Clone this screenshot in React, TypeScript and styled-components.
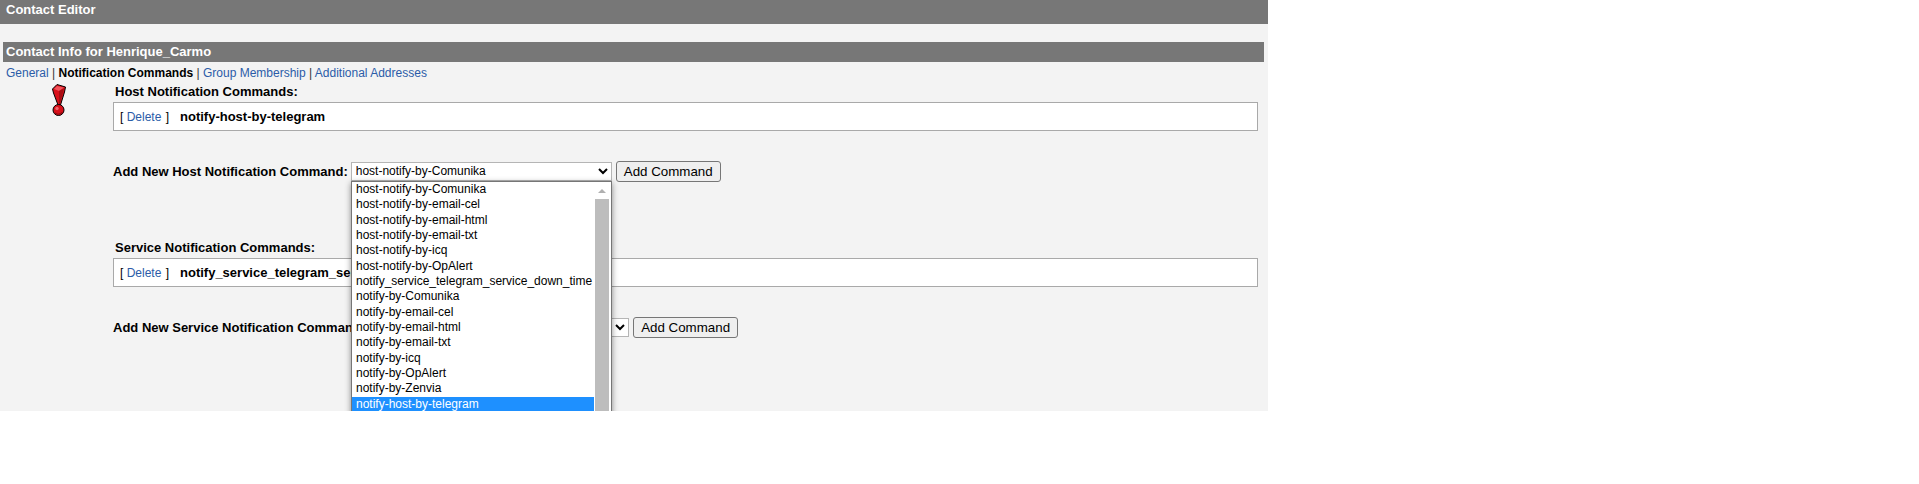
import React from "react";
import styled, { createGlobalStyle } from "styled-components";

const GlobalStyle = createGlobalStyle`
    html, body {
        margin: 0;
        padding: 0;
        background: #ffffff;
        font-family: "Liberation Sans", Arial, sans-serif;
    }
`;

const hostOptions = [
    "host-notify-by-Comunika",
    "host-notify-by-email-cel",
    "host-notify-by-email-html",
    "host-notify-by-email-txt",
    "host-notify-by-icq",
    "host-notify-by-OpAlert",
    "notify_service_telegram_service_down_time",
    "notify-by-Comunika",
    "notify-by-email-cel",
    "notify-by-email-html",
    "notify-by-email-txt",
    "notify-by-icq",
    "notify-by-OpAlert",
    "notify-by-Zenvia",
    "notify-host-by-telegram",
];

const AlertIcon = () => (
    <svg width="14" height="32" viewBox="0 0 14 32">
        <polygon points="0.5,5 5,0.5 13.5,3 12.5,8 8.5,21 6,21 1.5,9" fill="#d8101a" stroke="#000" strokeWidth="1" />
        <polygon points="2,5 5,2 12,3.6 7,7" fill="#f2525a" />
        <polygon points="7,7 12,4.5 8,20 7,20" fill="#a80c12" />
        <circle cx="6.5" cy="26" r="5.5" fill="#d8101a" stroke="#000" strokeWidth="1" />
        <circle cx="5" cy="24.5" r="1.7" fill="#f2666c" />
        <path d="M3 29 A5 5 0 0 0 10.5 28" fill="none" stroke="#8f0a0f" strokeWidth="1.2" />
    </svg>
);

const NotificationBlock: React.FC<{
    title: string;
    command: string;
    addLabel: string;
    selected: string;
    selectWidth: number;
    gapAfter: number;
}> = ({ title, command, addLabel, selected, selectWidth, gapAfter }) => (
    <Block $gapAfter={gapAfter}>
        <BlockTitle>{title}</BlockTitle>
        <CommandBox>
            <DeleteTag>
                [ <DeleteLink href="#">Delete</DeleteLink> ]
            </DeleteTag>
            <CommandName>{command}</CommandName>
        </CommandBox>
        <AddRow>
            <AddLabel>{addLabel}</AddLabel>
            <CommandSelect $width={selectWidth} defaultValue={selected}>
                <option value={selected}>{selected}</option>
            </CommandSelect>
            <AddButton type="button">Add Command</AddButton>
        </AddRow>
    </Block>
);

export default function App() {
    return (
        <Page>
            <GlobalStyle />
            <TitleBar>Contact Editor</TitleBar>
            <Section>
                <SectionBar>Contact Info for Henrique_Carmo</SectionBar>
                <Tabs>
                    <TextLink href="#">General</TextLink> | <ActiveTab>Notification Commands</ActiveTab> |{" "}
                    <TextLink href="#">Group Membership</TextLink> | <TextLink href="#">Additional Addresses</TextLink>
                </Tabs>
                <Body>
                    <IconColumn>
                        <AlertIcon />
                    </IconColumn>
                    <Content>
                        <NotificationBlock
                            title="Host Notification Commands:"
                            command="notify-host-by-telegram"
                            addLabel="Add New Host Notification Command:"
                            selected="host-notify-by-Comunika"
                            selectWidth={261}
                            gapAfter={58}
                        />
                        <NotificationBlock
                            title="Service Notification Commands:"
                            command="notify_service_telegram_service_down_time"
                            addLabel="Add New Service Notification Command:"
                            selected="host-notify-by-Comunika"
                            selectWidth={261}
                            gapAfter={0}
                        />
                    </Content>
                </Body>
            </Section>
            <DropList>
                <OptionList>
                    {hostOptions.map((name, i) => (
                        <OptionRow key={name} $active={i === hostOptions.length - 1}>
                            {name}
                        </OptionRow>
                    ))}
                </OptionList>
                <ScrollTrack>
                    <ScrollArrow />
                    <ScrollThumb />
                </ScrollTrack>
            </DropList>
        </Page>
    );
}

const Page = styled.div`
    position: relative;
    width: 1268px;
    height: 411px;
    overflow: hidden;
    background: #f3f3f3;
    font-family: "Liberation Sans", Arial, sans-serif;
    font-size: 12px;
    color: #000;
`;

const TitleBar = styled.div`
    height: 24px;
    line-height: 20px;
    padding-left: 6px;
    background: #777777;
    color: #fff;
    font-size: 13px;
    font-weight: bold;
`;

const Section = styled.div`
    margin: 18px 4px 0 3px;
`;

const SectionBar = styled.div`
    height: 20px;
    line-height: 20px;
    padding-left: 3px;
    background: #777777;
    color: #fff;
    font-size: 13px;
    font-weight: bold;
`;

const Tabs = styled.div`
    height: 22px;
    line-height: 22px;
    padding-left: 3px;
    font-size: 12px;
    color: #333;
`;

const TextLink = styled.a`
    color: #2b5ca8;
    text-decoration: none;
`;

const DeleteLink = styled(TextLink)`
    margin-right: 1px;
`;

const ActiveTab = styled.span`
    color: #000;
    font-weight: bold;
`;

const Body = styled.div`
    display: flex;
`;

const IconColumn = styled.div`
    flex: 0 0 110px;
    padding: 0 0 0 49px;
    box-sizing: border-box;
`;

const Content = styled.div`
    width: 1145px;
`;

const Block = styled.div<{ $gapAfter: number }>`
    margin-bottom: ${(p) => p.$gapAfter}px;
`;

const BlockTitle = styled.div`
    height: 18px;
    line-height: 16px;
    padding-left: 2px;
    font-size: 13px;
    font-weight: bold;
`;

const CommandBox = styled.div`
    display: flex;
    align-items: center;
    box-sizing: border-box;
    height: 29px;
    padding-left: 6px;
    background: #fff;
    border: 1px solid #a9a9a9;
`;

const DeleteTag = styled.span`
    width: 60px;
    font-size: 12px;
`;

const CommandName = styled.span`
    font-size: 13px;
    font-weight: bold;
`;

const AddRow = styled.div`
    display: flex;
    align-items: center;
    gap: 3px;
    height: 22px;
    margin-top: 29px;
`;

const AddLabel = styled.span`
    font-size: 13px;
    font-weight: bold;
`;

const CommandSelect = styled.select<{ $width: number }>`
    box-sizing: border-box;
    width: ${(p) => p.$width}px;
    height: 19px;
    padding: 0;
    border: 1px solid #b5b5b5;
    border-radius: 0;
    background: #fff;
    font-family: "Liberation Sans", Arial, sans-serif;
    font-size: 12px;
`;

const AddButton = styled.button`
    box-sizing: border-box;
    width: 105px;
    height: 21px;
    margin-left: 1px;
    padding: 0;
    background: #efefef;
    border: 1px solid #767676;
    border-radius: 3px;
    color: #000;
    font-family: "Liberation Sans", Arial, sans-serif;
    font-size: 13.33px;
`;

const DropList = styled.div`
    position: absolute;
    left: 351px;
    top: 181px;
    display: flex;
    box-sizing: border-box;
    width: 261px;
    height: 250px;
    background: #fff;
    border: 1px solid #767676;
    box-shadow: 0 2px 6px rgba(0, 0, 0, 0.45);
`;

const OptionList = styled.div`
    flex: 0 0 242px;
`;

const OptionRow = styled.div<{ $active: boolean }>`
    height: 15.33px;
    line-height: 14px;
    padding-left: 4px;
    white-space: nowrap;
    font-size: 12px;
    color: ${(p) => (p.$active ? "#fff" : "#000")};
    background: ${(p) => (p.$active ? "#1e90ff" : "transparent")};
`;

const ScrollTrack = styled.div`
    display: flex;
    flex-direction: column;
    align-items: center;
    width: 14px;
    margin-left: 1px;
`;

const ScrollArrow = styled.div`
    width: 0;
    height: 0;
    margin: 7px 0 6px;
    border-left: 4px solid transparent;
    border-right: 4px solid transparent;
    border-bottom: 4px solid #b0b0b0;
`;

const ScrollThumb = styled.div`
    flex: 1;
    width: 14px;
    background: #bdbdbd;
`;
